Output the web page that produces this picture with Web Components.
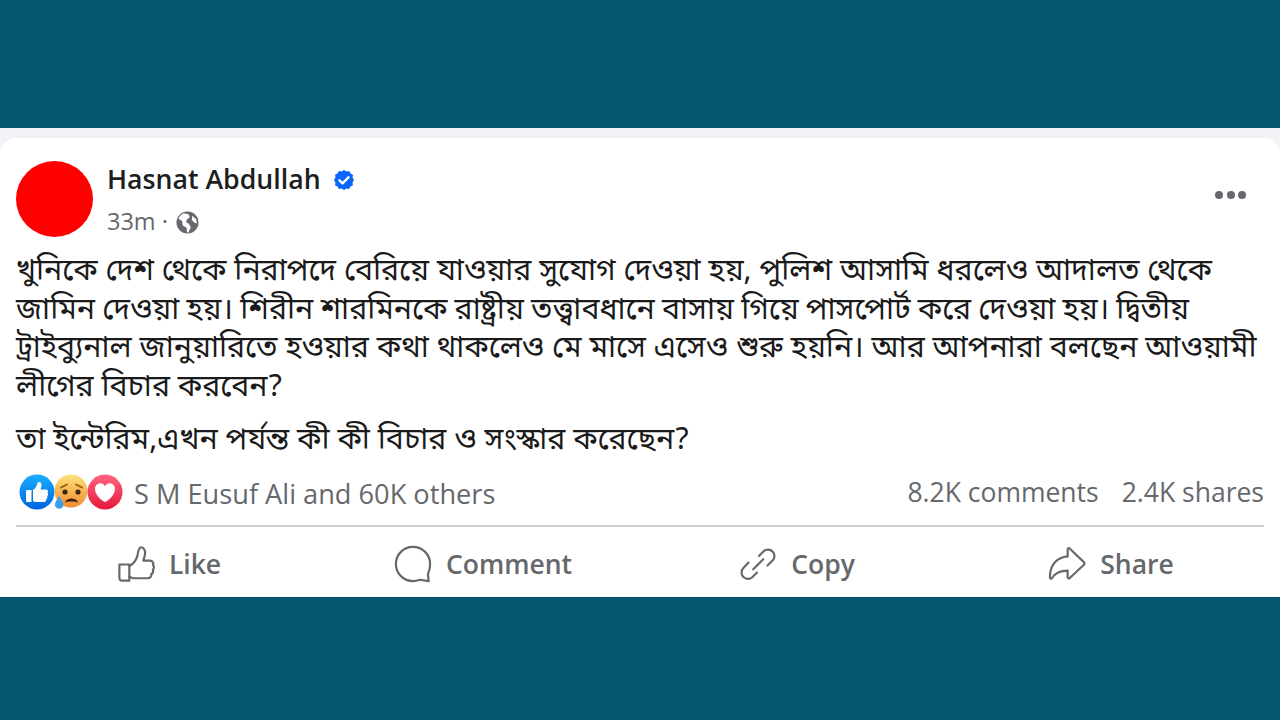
<!DOCTYPE html>
<html lang="bn">
<head>
<meta charset="UTF-8" />
<title>Post</title>
<style>
  html, body { margin: 0; height: 720px; overflow: hidden; background: #055671; }
  body { display: flex; flex-direction: column; font-family: "Open Sans", "Noto Sans", sans-serif; }
  .tight { word-spacing: -0.7px; }
</style>
</head>
<body>
<fb-post>
  <post-header slot="header" name="Hasnat Abdullah" time="33m"></post-header>
  <post-text slot="body">
    <span slot="p1">খুনিকে দেশ থেকে নিরাপদে বেরিয়ে যাওয়ার সুযোগ দেওয়া হয়, পুলিশ আসামি ধরলেও আদালত থেকে<br><span class="tight">জামিন দেওয়া হয়। শিরীন শারমিনকে রাষ্ট্রীয় তত্ত্বাবধানে বাসায় গিয়ে পাসপোর্ট করে দেওয়া হয়। দ্বিতীয়</span><br>ট্রাইব্যুনাল জানুয়ারিতে হওয়ার কথা থাকলেও মে মাসে এসেও শুরু হয়নি। আর আপনারা বলছেন আওয়ামী<br>লীগের বিচার করবেন?</span>
    <span slot="p2">তা ইন্টেরিম,এখন পর্যন্ত কী কী বিচার ও সংস্কার করেছেন?</span>
  </post-text>
  <post-stats slot="stats"></post-stats>
  <post-actions slot="actions">
    <action-button icon="like">Like</action-button>
    <action-button icon="comment">Comment</action-button>
    <action-button icon="copy">Copy</action-button>
    <action-button icon="share">Share</action-button>
  </post-actions>
</fb-post>

<script>
  const ICONS = {
    like: `<svg width="38" height="38" viewBox="0 0 40 40" fill="none" stroke="#65686c" stroke-width="2.3" stroke-linejoin="round" stroke-linecap="round"><path d="M2.500 20.500h10.500v17H5a2.500 2.500 0 0 1-2.500-2.500z"/><path d="M13 22c4-2 7.500-6.500 8.500-11 .6-2.600 1-8.500 4-8.500 3 0 4.400 3.500 4 7-.3 2.400-1.300 5-1.800 7h7c2.800 0 4 2.400 3.200 4.500 1.400 1.600 1.200 3.800-.2 5 .7 1.800 0 3.800-1.600 4.600.3 2.400-1.200 4.400-3.800 4.400H18c-2.300 0-3.800-.8-5-2"/></svg>`,
    comment: `<svg width="38" height="38" viewBox="0 0 40 40" fill="none" stroke="#65686c" stroke-width="2.300" stroke-linejoin="round" stroke-linecap="round"><path d="M20 2C10 2 2 10 2 20s8 18 18 18c2.700 0 5-.6 7-1.400l9.500 1.400-.8-7.500C37 27.800 38 24 38 20 38 10 30 2 20 2z"/></svg>`,
    copy: `<svg width="38" height="38" viewBox="0 0 40 40" fill="none" stroke="#65686c" stroke-width="2.300" stroke-linecap="round"><path d="M21 11.500l5-5a6.800 6.800 0 0 1 9.600 9.600L30 21.500"/><path d="M19 29l-5 5a6.800 6.800 0 0 1-9.600-9.600L10 18.500"/><path d="M15 25.500l10.500-10.500"/></svg>`,
    share: `<svg width="38" height="38" viewBox="0 0 40 40" fill="none" stroke="#65686c" stroke-width="2.300" stroke-linejoin="round" stroke-linecap="round"><path d="M22.500 3.500c-.9-.4-1.800.2-1.800 1.200v7.300C10 13 2 20 2 34c0 1.500 1.500 2 2.300.8C7.500 29.500 13 27 20.700 27v7c0 1 1.100 1.600 2 1L37.500 21c1.200-1 1.200-2.200 0-3.200z"/></svg>`
  };

  class FbPost extends HTMLElement {
    constructor() {
      super();
      this.attachShadow({ mode: "open" }).innerHTML = `
        <style>
          :host { display: flex; flex-direction: column; margin-top: 128px; height: 469px; background: #f0f2f5; }
          .card { flex: 1; background: #fff; margin-top: 10px; border-radius: 16px 16px 0 0; padding: 0 16px; display: flex; flex-direction: column; }
        </style>
        <div class="card">
          <slot name="header"></slot>
          <slot name="body"></slot>
          <slot name="stats"></slot>
          <slot name="actions"></slot>
        </div>`;
    }
  }

  class PostHeader extends HTMLElement {
    constructor() {
      super();
      const name = this.getAttribute("name");
      const time = this.getAttribute("time");
      this.attachShadow({ mode: "open" }).innerHTML = `
        <style>
          :host { display: flex; align-items: flex-start; padding-top: 23px; height: 80px; }
          .avatar { width: 77px; height: 76px; border-radius: 50%; background: #fe0000; flex: none; }
          .info { margin-left: 14px; flex: 1; }
          .name { display: flex; align-items: center; gap: 11px; font-size: 26.700px; font-weight: 600; color: #1c1e21; line-height: 36px; }
          .name svg { margin-top: 2px; }
          .meta { display: flex; align-items: center; gap: 6px; font-size: 23.500px; color: #65686c; line-height: 30px; margin-top: 9px; }
          .meta svg { margin: 2px 0 0 2px; }
          .more { display: flex; gap: 3.500px; margin: 30px 18px 0 0; }
          .more i { width: 8px; height: 8px; border-radius: 50%; background: #65686c; }
        </style>
        <div class="avatar"></div>
        <div class="info">
          <div class="name"><span>${name}</span>
            <svg width="24" height="24" viewBox="0 0 24 24"><path fill="#0866ff" d="M12 1l2.400 1.500 2.800-.4 1.300 2.500 2.500 1.300-.4 2.800L22 11l-1.500 2.400.4 2.800-2.500 1.300-1.300 2.500-2.800-.4L12 21.100l-2.400-1.500-2.800.4-1.300-2.500-2.500-1.300.4-2.800L2 11l1.500-2.400-.4-2.800 2.500-1.300 1.300-2.500 2.800.4z" transform="translate(0 1)"/><path fill="none" stroke="#fff" stroke-width="2.400" stroke-linecap="round" stroke-linejoin="round" d="M7.500 12.300l3 3 6-6"/></svg>
          </div>
          <div class="meta"><span>${time}</span><span>·</span>
            <svg width="23" height="23" viewBox="0 0 24 24"><circle cx="12" cy="12" r="11.500" fill="#65686c"/><path fill="#fff" d="M8 2.300l5 1 1.500 3-3 2.500-1 3 3 1.500 2 4-2.500 5-1.500.200-.5-5-4-2.500-.5-4.500L2.500 8C4 5 6 3.200 8 2.300zM17 5l4 3.500 1 4.500-3-1-2.500-3z"/></svg>
          </div>
        </div>
        <div class="more"><i></i><i></i><i></i></div>`;
    }
  }

  class PostText extends HTMLElement {
    constructor() {
      super();
      this.attachShadow({ mode: "open" }).innerHTML = `
        <style>
          :host { display: block; margin-top: 12px; font-family: "Noto Sans Bengali", "Lohit Bengali", "Noto Sans", sans-serif; font-size: 30.300px; line-height: 38.500px; color: #1a1a1a; white-space: nowrap; }
          p { margin: 0; }
          p + p { margin-top: 15px; }
        </style>
        <p><slot name="p1"></slot></p>
        <p><slot name="p2"></slot></p>`;
    }
  }

  class PostStats extends HTMLElement {
    constructor() {
      super();
      this.attachShadow({ mode: "open" }).innerHTML = `
        <style>
          :host { display: flex; align-items: center; justify-content: space-between; height: 62px; padding-bottom: 2px; border-bottom: 2px solid #ced0d4; color: #65686c; }
          .left { display: flex; align-items: center; font-size: 27.200px; }
          .left span { margin-top: 3px; }
          .faces { display: flex; margin: 0 11px 0 3px; }
          .faces svg { display: block; }
          .faces svg + svg { margin-left: -2px; }
          .right { display: flex; gap: 23px; font-size: 26.500px; }
        </style>
        <div class="left">
          <div class="faces">
            <svg width="36" height="36" viewBox="0 0 36 36"><defs><linearGradient id="b" x1="0" y1="0" x2="0" y2="1"><stop offset="0" stop-color="#18afff"/><stop offset="1" stop-color="#0062df"/></linearGradient></defs><circle cx="18" cy="18" r="17.500" fill="url(#b)"/><path fill="#fff" d="M8 16h4.500v12H8.500A1.500 1.500 0 0 1 7 26.500v-9A1.500 1.500 0 0 1 8 16zm6 0c2-1 4-4 4.500-7 .3-1.600 3.800-1.500 4 1.500.1 2-.5 3.500-1 5h5.500c2 0 2.600 2 1.500 3.300 1 1 .8 2.700-.3 3.400.5 1.300 0 2.600-1 3.100.3 1.700-.7 2.700-2.200 2.700h-7c-1.700 0-2.800-.4-4-1z"/></svg>
            <svg width="36" height="36" viewBox="0 0 36 36"><defs><linearGradient id="y" x1="0" y1="0" x2="0" y2="1"><stop offset="0" stop-color="#fde27a"/><stop offset="1" stop-color="#f28b30"/></linearGradient></defs><circle cx="18" cy="17" r="16.500" fill="url(#y)"/><circle cx="12" cy="18" r="2.600" fill="#3a2413"/><circle cx="25" cy="18" r="2.600" fill="#3a2413"/><path d="M8 13.500l6-3M29 13.500l-6-3" stroke="#9a5518" stroke-width="1.800" fill="none" stroke-linecap="round"/><path d="M12 28.500c1.500-5.500 11.500-5.500 13 0-2-1.500-11-1.500-13 0z" fill="#3f2210"/><path d="M6 22c2.500 3.700 4.500 6 4.500 8.500a4.300 4.300 0 0 1-8.600 0C1.900 28 4 25.700 6 22z" fill="#3f9fe6"/></svg>
            <svg width="36" height="36" viewBox="0 0 36 36"><defs><linearGradient id="r" x1="0" y1="0" x2="0" y2="1"><stop offset="0" stop-color="#ff6680"/><stop offset="1" stop-color="#e61739"/></linearGradient></defs><circle cx="18" cy="18" r="17.500" fill="url(#r)"/><path fill="#fff" d="M18 28c-1 0-10-6-10-13 0-3.500 2.500-5.800 5.300-5.800 2 0 3.700 1.100 4.700 3 1-1.900 2.700-3 4.700-3C25.500 9.200 28 11.500 28 15c0 7-9 13-10 13z"/></svg>
          </div>
          <span>S M Eusuf Ali and 60K others</span>
        </div>
        <div class="right"><span>8.2K comments</span><span>2.4K shares</span></div>`;
    }
  }

  class PostActions extends HTMLElement {
    constructor() {
      super();
      this.attachShadow({ mode: "open" }).innerHTML = `
        <style>
          :host { display: grid; grid-template-columns: repeat(4, 1fr); height: 70.500px; margin: 0 -4px; }
        </style>
        <slot></slot>`;
    }
  }

  class ActionButton extends HTMLElement {
    constructor() {
      super();
      const icon = ICONS[this.getAttribute("icon")];
      this.attachShadow({ mode: "open" }).innerHTML = `
        <style>
          :host { display: flex; align-items: center; justify-content: center; gap: 14px; padding-top: 4px; font-size: 26.500px; font-weight: 600; color: #65686c; }
          svg { display: block; }
        </style>
        ${icon}<slot></slot>`;
    }
  }

  customElements.define("fb-post", FbPost);
  customElements.define("post-header", PostHeader);
  customElements.define("post-text", PostText);
  customElements.define("post-stats", PostStats);
  customElements.define("post-actions", PostActions);
  customElements.define("action-button", ActionButton);
</script>
</body>
</html>
